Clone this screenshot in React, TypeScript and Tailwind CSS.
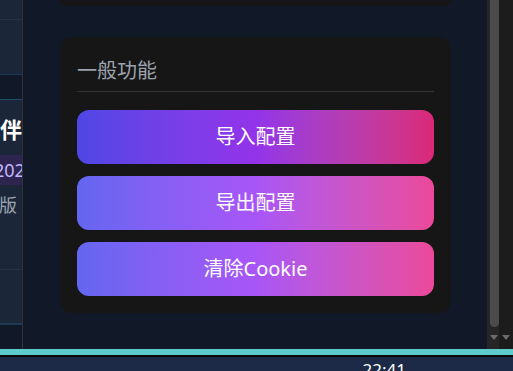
const actions = [
  { label: "导入配置", tone: "from-[#4f46e5] via-[#9333ea] to-[#db2777]" },
  { label: "导出配置", tone: "from-[#6366f1] via-[#a855f7] to-[#ec4899]" },
  { label: "清除Cookie", tone: "from-[#6366f1] via-[#a855f7] to-[#ec4899]" },
]

function SidePanel() {
  return (
    <aside className="flex h-full w-[23px] shrink-0 flex-col overflow-hidden border-r border-[#2f3237] bg-[#1b2638]">
      <div className="h-[20px] border-b border-[#243245]" />
      <div className="h-[55px] border-b border-[#1e3a52]" />
      <div className="h-[25px] border-b border-[#1e4a63] bg-[#111827]" />
      <div className="flex h-[55px] items-end justify-end pb-[15px]">
        <span className="whitespace-nowrap text-[22px] font-bold leading-none text-white">伴</span>
      </div>
      <div className="flex h-[30px] items-center bg-[#2d2550]">
        <span className="-ml-[6px] whitespace-nowrap text-[18px] leading-none text-[#c4b5fd]">2024</span>
      </div>
      <div className="flex h-[40px] items-center justify-end pr-[5px]">
        <span className="whitespace-nowrap text-[18px] leading-none text-[#9ca3af]">版</span>
      </div>
      <div className="h-[45px] border-b border-[#243245]" />
      <div className="h-[55px] border-b-2 border-[#1e3a52]" />
      <div className="flex-1 bg-[#111827]" />
    </aside>
  )
}

function ScrollBar() {
  return (
    <div className="flex h-full shrink-0">
      <div className="flex w-[12px] flex-col items-center bg-[#262626]">
        <div className="ml-[2px] h-[327px] w-[9px] rounded-b-[5px] bg-[#4b4b4b]" />
        <div className="mt-[8px] ml-[2px] h-0 w-0 border-x-[4px] border-t-[5px] border-x-transparent border-t-[#6b6b6b]" />
      </div>
      <div className="flex w-[14px] flex-col items-center bg-[#1c1c1c]">
        <div className="mt-[335px] h-0 w-0 border-x-[4px] border-t-[5px] border-x-transparent border-t-[#6b6b6b]" />
      </div>
    </div>
  )
}

export default function App() {
  return (
    <div
      className="flex h-[371px] w-[513px] flex-col overflow-hidden bg-[#111827]"
      style={{ fontFamily: '"Noto Sans", "Noto Sans CJK SC", sans-serif' }}
    >
      <div className="flex h-[349px] shrink-0">
        <SidePanel />
        <main className="flex flex-1 flex-col bg-[#111827] pl-[37px] pr-[36px]">
          <div className="h-[6px] rounded-b-[10px] bg-[#161616]" />
          <section className="mt-[31px] rounded-[12px] bg-[#161616] px-[17px] pt-[20px] pb-[17px]">
            <h2 className="border-b border-[#343434] pb-[6px] text-[20px] leading-[28px] text-[#9ca3af]">
              一般功能
            </h2>
            <div className="mt-[18px] flex flex-col gap-[12px]">
              {actions.map((a) => (
                <button
                  key={a.label}
                  className={`flex h-[54px] items-center justify-center rounded-[12px] bg-gradient-to-r text-[20px] text-white ${a.tone}`}
                >
                  {a.label}
                </button>
              ))}
            </div>
          </section>
        </main>
        <ScrollBar />
      </div>
      <div className="h-[6px] shrink-0 bg-[#5ecccc]" />
      <div className="h-[2px] shrink-0 bg-[#0a0a0a]" />
      <footer className="flex flex-1 justify-end bg-[#1c2a47] pr-[107px] pt-[3px]">
        <span className="text-[17px] leading-[20px] text-white">22:41</span>
      </footer>
    </div>
  )
}
